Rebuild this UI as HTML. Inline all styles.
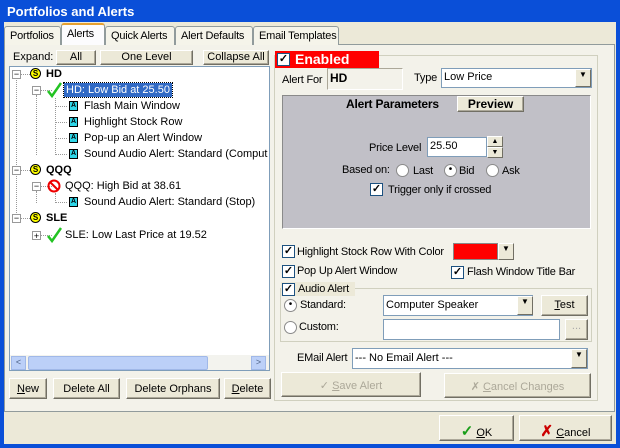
<!DOCTYPE html>
<html><head><meta charset="utf-8"><style>
*{box-sizing:border-box;margin:0;padding:0;white-space:nowrap}
body{width:620px;height:448px;overflow:hidden;background:#0a4fd8;font-family:"Liberation Sans",sans-serif;font-size:11px;color:#000;position:relative}
.a{position:absolute}
.win{left:4px;top:22px;width:612px;height:422px;background:#ece9d8}
.title{left:7px;top:4px;color:#fff;font-weight:bold;font-size:13px}
.tab{top:26px;height:19px;border:1px solid #919b9c;border-bottom:none;background:#f5f4ea;padding:3px 0 0 5px;border-radius:3px 3px 0 0;letter-spacing:-0.2px}
.btn{background:#ece9d8;border:1px solid;border-color:#fff #716f64 #716f64 #fff;box-shadow:inset -1px -1px 0 #aca899;text-align:center;line-height:normal}
.white{background:#fff;border:1px solid;border-color:#7f9db9;overflow:hidden}
.sunk{border:1px solid;border-color:#aca899 #fff #fff #aca899}
.cb{width:13px;height:13px;border:1px solid #1c5180;background:#fff;font-size:11px;line-height:11px;text-align:center;font-weight:bold}
.rd{width:13px;height:13px;border:1px solid #8a8a8a;border-radius:50%;background:#fff}
.dd{width:16px;background:#ece9d8;border:1px solid;border-color:#fff #716f64 #716f64 #fff;font-size:8px;text-align:center}
.ic{width:9px;height:10px;background:#2fd6e8;border:1px solid #000;font-size:7px;line-height:8px;text-align:center;font-weight:bold}
.s{width:11px;height:11px;border-radius:50%;background:#ff0;border:1px solid #000;font-size:8px;line-height:9px;text-align:center;font-weight:bold}
.pm{width:9px;height:9px;border:1px solid #999;background:#fff;font-size:9px;line-height:6px;text-align:center;color:#000}
.dot{border-left:1px dotted #999}
.hd{border-top:1px dotted #999}
.t{letter-spacing:-0.2px}
</style></head><body>
<div class="a title">Portfolios and Alerts</div>
<div class="a win"></div>
<div class="a" style="left:4px;top:44px;width:611px;height:368px;border:1px solid #919b9c;background:#f3f2ea"></div>
<div class="a tab" style="left:4px;width:57px">Portfolios</div>
<div class="a tab" style="left:61px;top:23px;height:22px;width:44px;background:#fcfcfe;border-top:2px solid #e6a030">Alerts</div>
<div class="a tab" style="left:105px;width:70px">Quick Alerts</div>
<div class="a tab" style="left:175px;width:78px">Alert Defaults</div>
<div class="a tab" style="left:253px;width:86px">Email Templates</div>
<div class="a" style="left:13px;top:51px">Expand:</div>
<div class="a btn" style="left:56px;top:50px;width:40px;height:15px">All</div>
<div class="a btn" style="left:100px;top:50px;width:93px;height:15px">One Level</div>
<div class="a btn" style="left:203px;top:50px;width:66px;height:15px">Collapse All</div>
<div class="a white" style="left:9px;top:66px;width:261px;height:305px"></div>
<div class="a dot" style="left:16px;top:80px;height:135px"></div>
<div class="a dot" style="left:36px;top:95px;height:60px"></div>
<div class="a dot" style="left:36px;top:191px;height:12px"></div>
<div class="a dot" style="left:55px;top:98px;height:57px"></div>
<div class="a dot" style="left:55px;top:193px;height:10px"></div>
<div class="a hd" style="left:20px;top:74px;width:12px"></div>
<div class="a hd" style="left:20px;top:170px;width:12px"></div>
<div class="a hd" style="left:20px;top:218px;width:12px"></div>
<div class="a hd" style="left:40px;top:90px;width:12px"></div>
<div class="a hd" style="left:40px;top:186px;width:12px"></div>
<div class="a hd" style="left:40px;top:235px;width:12px"></div>
<div class="a hd" style="left:55px;top:106px;width:12px"></div>
<div class="a hd" style="left:55px;top:122px;width:12px"></div>
<div class="a hd" style="left:55px;top:138px;width:12px"></div>
<div class="a hd" style="left:55px;top:154px;width:12px"></div>
<div class="a hd" style="left:55px;top:202px;width:12px"></div>
<div class="a pm" style="left:12px;top:70px">−</div>
<div class="a pm" style="left:12px;top:166px">−</div>
<div class="a pm" style="left:12px;top:214px">−</div>
<div class="a pm" style="left:32px;top:86px">−</div>
<div class="a pm" style="left:32px;top:182px">−</div>
<div class="a pm" style="left:32px;top:231px;line-height:8px">+</div>
<div class="a s" style="left:30px;top:68px">S</div><div class="a" style="left:46px;top:68px;font-weight:bold">HD</div>
<div class="a s" style="left:30px;top:164px">S</div><div class="a" style="left:46px;top:164px;font-weight:bold">QQQ</div>
<div class="a s" style="left:30px;top:212px">S</div><div class="a" style="left:46px;top:212px;font-weight:bold">SLE</div>
<svg class="a" style="left:46px;top:82px" width="16" height="16"><path d="M2 9 L6 14 L15 1" stroke="#22c322" stroke-width="2.5" fill="none"/></svg>
<svg class="a" style="left:46px;top:227px" width="16" height="16"><path d="M2 9 L6 14 L15 1" stroke="#22c322" stroke-width="2.5" fill="none"/></svg>
<svg class="a" style="left:47px;top:179px" width="14" height="14"><circle cx="7" cy="7" r="5.5" stroke="#e00" stroke-width="2" fill="none"/><path d="M3 3 L11 11" stroke="#e00" stroke-width="2"/></svg>
<div class="a" style="left:64px;top:83px;background:#316ac5;color:#fff;padding:1px 2px;outline:1px dotted #000">HD: Low Bid at 25.50</div>
<div class="a ic" style="left:69px;top:101px">A</div><div class="a" style="left:84px;top:100px">Flash Main Window</div>
<div class="a ic" style="left:69px;top:117px">A</div><div class="a" style="left:84px;top:116px">Highlight Stock Row</div>
<div class="a ic" style="left:69px;top:133px">A</div><div class="a" style="left:84px;top:132px">Pop-up an Alert Window</div>
<div class="a ic" style="left:69px;top:149px">A</div><div class="a" style="left:84px;top:148px;width:184px;overflow:hidden">Sound Audio Alert: Standard (Computer</div>
<div class="a" style="left:65px;top:180px">QQQ: High Bid at 38.61</div>
<div class="a ic" style="left:69px;top:197px">A</div><div class="a" style="left:84px;top:196px">Sound Audio Alert: Standard (Stop)</div>
<div class="a" style="left:65px;top:229px">SLE: Low Last Price at 19.52</div>
<div class="a" style="left:10px;top:355px;width:259px;height:15px;background:#f3f3ee"></div>
<div class="a" style="left:11px;top:356px;width:15px;height:14px;background:#bcd0f8;border:1px solid #a0b8e8;font-size:9px;text-align:center;color:#4d6185">&lt;</div>
<div class="a" style="left:28px;top:356px;width:180px;height:14px;background:#bcd0f8;border:1px solid #a0b8e8;border-radius:2px"></div>
<div class="a" style="left:251px;top:356px;width:15px;height:14px;background:#bcd0f8;border:1px solid #a0b8e8;font-size:9px;text-align:center;color:#4d6185">&gt;</div>
<div class="a btn" style="left:9px;top:378px;width:38px;height:21px;padding-top:4px"><u>N</u>ew</div>
<div class="a btn" style="left:53px;top:378px;width:67px;height:21px;padding-top:4px">Delete All</div>
<div class="a btn" style="left:126px;top:378px;width:94px;height:21px;padding-top:4px">Delete Orphans</div>
<div class="a btn" style="left:224px;top:378px;width:47px;height:21px;padding-top:4px"><u>D</u>elete</div>
<div class="a sunk" style="left:274px;top:55px;width:324px;height:346px;border-color:#d0d0bf"></div>
<div class="a" style="left:275px;top:51px;width:104px;height:17px;background:#f00"></div>
<div class="a cb" style="left:277px;top:53px">✓</div>
<div class="a" style="left:295px;top:51px;color:#fff;font-weight:bold;font-size:14px">Enabled</div>
<div class="a t" style="left:282px;top:74px">Alert For</div>
<div class="a sunk" style="left:327px;top:68px;width:76px;height:22px;font-weight:bold;font-size:12px;padding:2px">HD</div>
<div class="a t" style="left:414px;top:72px">Type</div>
<div class="a white" style="left:441px;top:68px;width:151px;height:20px;padding:2px 2px">Low Price</div>
<div class="a dd" style="left:575px;top:69px;height:18px">▼</div>
<div class="a" style="left:282px;top:95px;width:309px;height:134px;background:#c1c0c7;border:1px solid;border-color:#8a8a8a #fff #fff #8a8a8a"></div>
<div class="a t" style="left:346px;top:97px;font-weight:bold;font-size:12px">Alert Parameters</div>
<div class="a btn" style="left:457px;top:96px;width:67px;height:16px;font-weight:bold;font-size:12px">Preview</div>
<div class="a t" style="left:369px;top:142px">Price Level</div>
<div class="a white" style="left:427px;top:137px;width:60px;height:20px;padding:2px">25.50</div>
<div class="a dd" style="left:487px;top:136px;height:11px;font-size:7px;line-height:9px">▲</div>
<div class="a dd" style="left:487px;top:147px;height:11px;font-size:7px;line-height:9px">▼</div>
<div class="a t" style="left:342px;top:164px">Based on:</div>
<div class="a rd" style="left:396px;top:164px"></div><div class="a t" style="left:413px;top:165px">Last</div>
<div class="a rd" style="left:444px;top:164px;text-align:center;font-size:10px;line-height:10px">•</div><div class="a t" style="left:459px;top:165px">Bid</div>
<div class="a rd" style="left:486px;top:164px"></div><div class="a t" style="left:502px;top:165px">Ask</div>
<div class="a cb" style="left:370px;top:183px">✓</div><div class="a t" style="left:388px;top:184px">Trigger only if crossed</div>
<div class="a cb" style="left:282px;top:245px">✓</div><div class="a t" style="left:297px;top:246px">Highlight Stock Row With Color</div>
<div class="a" style="left:453px;top:243px;width:45px;height:17px;background:#f00;border:1px solid #888"></div>
<div class="a dd" style="left:498px;top:243px;height:17px">▼</div>
<div class="a cb" style="left:282px;top:265px">✓</div><div class="a t" style="left:297px;top:265px">Pop Up Alert Window</div>
<div class="a cb" style="left:451px;top:266px">✓</div><div class="a t" style="left:467px;top:266px">Flash Window Title Bar</div>
<div class="a sunk" style="left:280px;top:288px;width:312px;height:54px;border-color:#d0d0bf"></div>
<div class="a" style="left:281px;top:282px;width:74px;height:14px;background:#ece9d8"></div>
<div class="a cb" style="left:282px;top:283px">✓</div><div class="a t" style="left:298px;top:283px">Audio Alert</div>
<div class="a rd" style="left:284px;top:299px;text-align:center;font-size:10px;line-height:10px">•</div><div class="a t" style="left:300px;top:299px">Standard:</div>
<div class="a rd" style="left:284px;top:321px"></div><div class="a t" style="left:299px;top:321px">Custom:</div>
<div class="a white" style="left:383px;top:295px;width:150px;height:21px;padding:3px 2px">Computer Speaker</div>
<div class="a dd" style="left:517px;top:296px;height:19px">▼</div>
<div class="a btn" style="left:541px;top:295px;width:47px;height:21px;padding-top:3px"><u>T</u>est</div>
<div class="a white" style="left:383px;top:319px;width:177px;height:21px"></div>
<div class="a btn" style="left:565px;top:319px;width:23px;height:21px;color:#aaa">...</div>
<div class="a t" style="left:297px;top:352px">EMail Alert</div>
<div class="a white" style="left:352px;top:348px;width:236px;height:21px;padding:3px 2px">--- No Email Alert ---</div>
<div class="a dd" style="left:571px;top:349px;height:19px">▼</div>
<div class="a btn" style="left:281px;top:372px;width:140px;height:25px;padding-top:6px;color:#aca899">✓ <u>S</u>ave Alert</div>
<div class="a btn" style="left:444px;top:373px;width:147px;height:25px;padding-top:6px;color:#aca899">✗ <u>C</u>ancel Changes</div>
<div class="a btn" style="left:439px;top:415px;width:75px;height:26px;padding-top:6px"><span style="color:#1a9e1a;font-weight:bold;font-size:15px">✓</span> <u>O</u>K</div>
<div class="a btn" style="left:519px;top:415px;width:93px;height:26px;padding-top:6px"><span style="color:#c00;font-weight:bold;font-size:15px">✗</span> <u>C</u>ancel</div>
</body></html>
